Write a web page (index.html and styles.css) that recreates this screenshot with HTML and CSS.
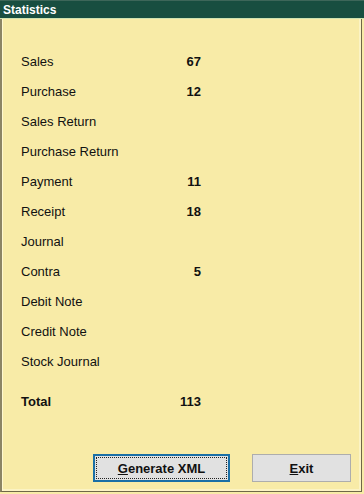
FILE: index.html
```html
<!DOCTYPE html>
<html>
<head>
<meta charset="utf-8">
<link rel="stylesheet" href="styles.css">
</head>
<body>
<div class="window">
  <div class="titlebar">Statistics</div>
  <div class="content">
    <div class="stats">
      <div class="row"><span class="label">Sales</span><span class="num">67</span></div>
      <div class="row"><span class="label">Purchase</span><span class="num">12</span></div>
      <div class="row"><span class="label">Sales Return</span><span class="num"></span></div>
      <div class="row"><span class="label">Purchase Return</span><span class="num"></span></div>
      <div class="row"><span class="label">Payment</span><span class="num">11</span></div>
      <div class="row"><span class="label">Receipt</span><span class="num">18</span></div>
      <div class="row"><span class="label">Journal</span><span class="num"></span></div>
      <div class="row"><span class="label">Contra</span><span class="num">5</span></div>
      <div class="row"><span class="label">Debit Note</span><span class="num"></span></div>
      <div class="row"><span class="label">Credit Note</span><span class="num"></span></div>
      <div class="row"><span class="label">Stock Journal</span><span class="num"></span></div>
      <div class="row total"><span class="label">Total</span><span class="num">113</span></div>
    </div>
    <div class="buttons">
      <button class="btn primary"><span class="focus"><u>G</u>enerate XML</span></button>
      <button class="btn exit"><u>E</u>xit</button>
    </div>
  </div>
</div>
</body>
</html>
```
FILE: styles.css
```css
html, body {
  margin: 0;
  padding: 0;
  background: #f8eba7;
}
body {
  width: 364px;
  height: 494px;
  overflow: hidden;
  font-family: "Liberation Sans", Arial, sans-serif;
  font-size: 13px;
  color: #111;
}
.window {
  display: flex;
  flex-direction: column;
  width: 364px;
  height: 494px;
}
.titlebar {
  height: 19px;
  line-height: 18px;
  background: #184e40;
  color: #fff;
  font-weight: bold;
  font-size: 12px;
  padding-left: 3px;
  border-top: 1px solid #3d6659;
  border-bottom: 1px solid #cfe3b0;
  box-sizing: border-box;
}
.content {
  flex: 1;
  display: flex;
  flex-direction: column;
  margin-right: 2px;
  margin-bottom: 2px;
  border-left: 2px solid #8c8464;
  border-right: 1px solid #6e6748;
  border-bottom: 1px solid #6e6748;
  box-shadow: inset 1px 0 0 #fff8d0, inset -2px -2px 0 #fbf3c4;
}
.stats {
  padding-top: 27px;
  padding-left: 19px;
  width: 180px;
}
.row {
  display: flex;
  justify-content: space-between;
  height: 30px;
  align-items: center;
}
.num {
  font-weight: bold;
}
.total {
  margin-top: 10px;
  font-weight: bold;
}
.buttons {
  margin-top: auto;
  display: flex;
  gap: 22px;
  padding-left: 91px;
  padding-bottom: 9px;
}
.btn {
  height: 28px;
  background: #e1e1e1;
  font-family: "Liberation Sans", Arial, sans-serif;
  font-size: 13px;
  font-weight: bold;
  color: #111;
  padding: 0;
  margin: 0;
}
.primary {
  width: 137px;
  border: 2px solid #1a6fa6;
  padding: 1px;
}
.primary .focus {
  display: flex;
  height: 100%;
  align-items: center;
  justify-content: center;
  border: 1px dotted #222;
  box-sizing: border-box;
}
.exit {
  width: 99px;
  border: 1px solid #adadad;
}
```
